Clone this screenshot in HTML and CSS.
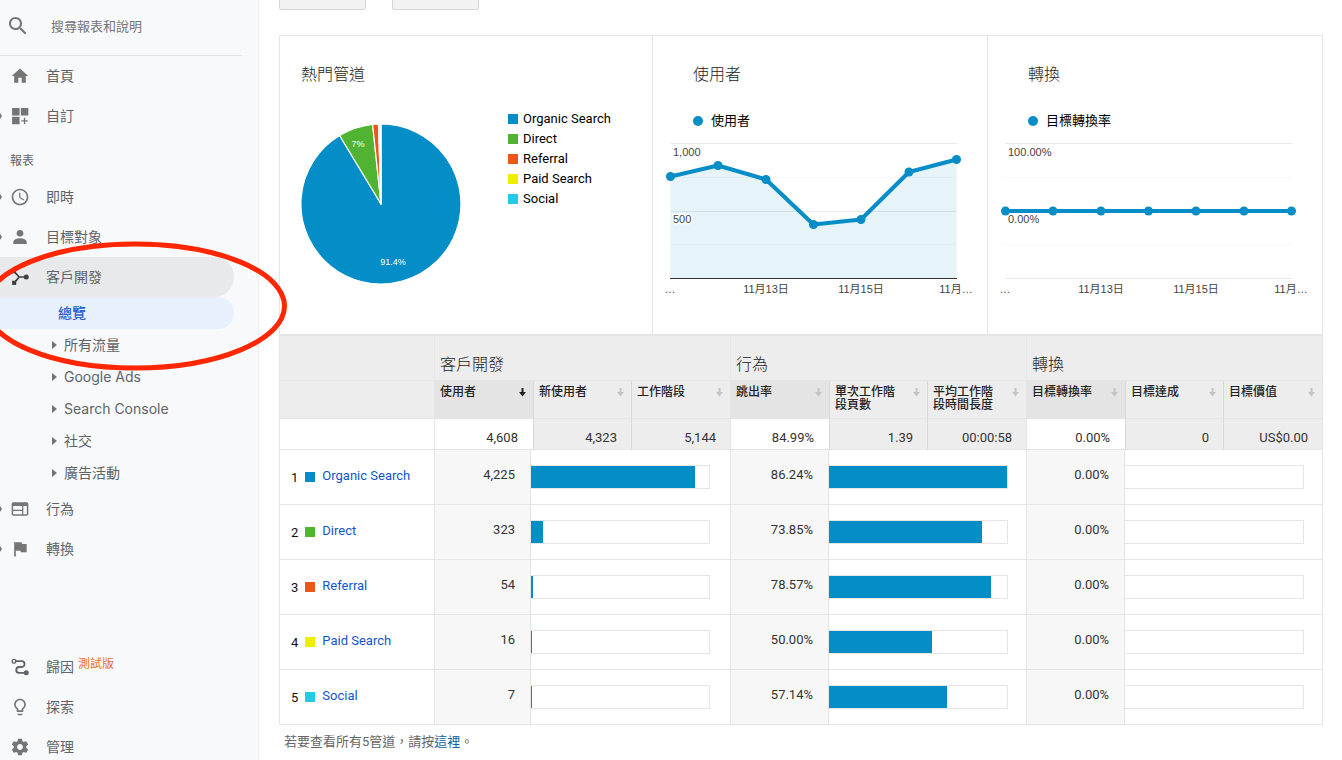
FILE: index.html
```html
<!DOCTYPE html>
<html lang="zh-Hant">
<head>
<meta charset="utf-8">
<title>客戶開發總覽</title>
<link rel="stylesheet" href="styles.css">
</head>
<body>
<aside class="sidebar">
  <label class="search">
    <svg class="search-icon" viewBox="0 0 24 24"><path d="M15.5 14h-.79l-.28-.27C15.41 12.59 16 11.11 16 9.5 16 5.91 13.09 3 9.5 3S3 5.91 3 9.5 5.91 16 9.5 16c1.61 0 3.09-.59 4.23-1.57l.27.28v.79l5 4.99L20.49 19l-4.99-5zm-6 0C7.01 14 5 11.99 5 9.5S7.01 5 9.5 5 14 7.01 14 9.5 11.99 14 9.5 14z"/></svg>
    <input class="search-input" type="text" placeholder="搜尋報表和說明" aria-label="搜尋報表和說明">
  </label>
  <nav class="menu">
    <a class="item" href="#"><span class="edge"></span><svg class="icon" viewBox="0 0 24 24"><path d="M10 20v-6h4v6h5v-8h3L12 3 2 12h3v8z"/></svg>首頁</a>
    <a class="item" href="#"><span class="edge"><svg class="edge-arrow" viewBox="0 0 2 6"><path d="M0 0l2 3-2 3z"/></svg></span><svg class="icon" viewBox="0 0 24 24"><path d="M2.500 2.500h9v9h-9zM13 2.500h9v9h-9zM2.500 13h9v9h-9zM16.700 14h1.600v3h3v1.600h-3v3h-1.600v-3h-3V17h3z"/></svg>自訂</a>
    <h2 class="section">報表</h2>
    <a class="item" href="#"><span class="edge"><svg class="edge-arrow" viewBox="0 0 2 6"><path d="M0 0l2 3-2 3z"/></svg></span><svg class="icon" viewBox="0 0 24 24"><path d="M11.990 2C6.470 2 2 6.480 2 12s4.470 10 9.990 10C17.520 22 22 17.520 22 12S17.520 2 11.990 2zM12 20c-4.420 0-8-3.580-8-8s3.580-8 8-8 8 3.580 8 8-3.580 8-8 8zm.5-13H11v6l5.250 3.150.75-1.230-4.500-2.670z"/></svg>即時</a>
    <a class="item" href="#"><span class="edge"><svg class="edge-arrow" viewBox="0 0 2 6"><path d="M0 0l2 3-2 3z"/></svg></span><svg class="icon" viewBox="0 0 24 24"><circle cx="12" cy="7.500" r="4"/><path d="M12 13.500c-3 0-8 1.300-8 4.500v2.500h16V18c0-3.200-5-4.500-8-4.500z"/></svg>目標對象</a>
    <a class="item open" href="#"><span class="edge"></span><svg class="icon" viewBox="0 0 24 24"><path d="M4.500 5L11 12L5 19M11 12h9" fill="none" stroke="currentColor" stroke-width="2"/><rect x="2" y="2.500" width="5" height="5"/><rect x="2.500" y="16.500" width="5" height="5"/><circle cx="19.500" cy="12" r="3"/></svg>客戶開發</a>
    <a class="sub current" href="#" aria-current="page">總覽</a>
    <a class="sub" href="#"><svg class="arrow" viewBox="0 0 5 8"><path d="M0 0l5 4-5 4z"/></svg>所有流量</a>
    <a class="sub" href="#"><svg class="arrow" viewBox="0 0 5 8"><path d="M0 0l5 4-5 4z"/></svg>Google Ads</a>
    <a class="sub" href="#"><svg class="arrow" viewBox="0 0 5 8"><path d="M0 0l5 4-5 4z"/></svg>Search Console</a>
    <a class="sub" href="#"><svg class="arrow" viewBox="0 0 5 8"><path d="M0 0l5 4-5 4z"/></svg>社交</a>
    <a class="sub" href="#"><svg class="arrow" viewBox="0 0 5 8"><path d="M0 0l5 4-5 4z"/></svg>廣告活動</a>
    <a class="item" href="#"><span class="edge"><svg class="edge-arrow" viewBox="0 0 2 6"><path d="M0 0l2 3-2 3z"/></svg></span><svg class="icon" viewBox="0 0 24 24"><path fill-rule="evenodd" d="M20 4H4c-1.100 0-2 .9-2 2v12c0 1.100.9 2 2 2h16c1.100 0 2-.9 2-2V6c0-1.100-.9-2-2-2zM14.500 18.300H3.800v-4h10.700zM14.500 12.800H3.800V8.500h10.700zM20.200 18.300h-4.200V8.500h4.200z"/></svg>行為</a>
    <a class="item" href="#"><span class="edge"><svg class="edge-arrow" viewBox="0 0 2 6"><path d="M0 0l2 3-2 3z"/></svg></span><svg class="icon" viewBox="0 0 24 24"><path d="M14.400 6L14 4H5v17h2v-7h5.600l.4 2h7V6z"/></svg>轉換</a>
  </nav>
  <nav class="menu tools">
    <a class="item" href="#"><span class="edge"></span><svg class="icon dark" viewBox="0 0 24 24"><path d="M6 5h8a3.200 3.200 0 0 1 0 7h-3a3.200 3.200 0 0 0 0 7h8" fill="none" stroke="currentColor" stroke-width="2.200"/><circle cx="4.800" cy="5" r="2.200" fill="#f8f9fb" stroke="currentColor" stroke-width="1.600"/><circle cx="19.500" cy="19" r="3"/></svg>歸因<sup class="beta">測試版</sup></a>
    <a class="item" href="#"><span class="edge"></span><svg class="icon" viewBox="0 0 24 24"><path d="M9 21c0 .55.45 1 1 1h4c.55 0 1-.45 1-1v-1H9v1zm3-19C8.140 2 5 5.140 5 9c0 2.380 1.190 4.470 3 5.740V17c0 .55.45 1 1 1h6c.55 0 1-.45 1-1v-2.260c1.810-1.270 3-3.360 3-5.740 0-3.860-3.140-7-7-7zm2.850 11.100l-.85.6V16h-4v-2.300l-.85-.6C7.800 12.160 7 10.630 7 9c0-2.760 2.240-5 5-5s5 2.240 5 5c0 1.630-.8 3.160-2.150 4.100z"/></svg>探索</a>
    <a class="item" href="#"><span class="edge"></span><svg class="icon" viewBox="0 0 24 24"><path d="M19.430 12.980c.04-.32.07-.64.07-.98s-.03-.66-.07-.98l2.110-1.650c.19-.15.24-.42.12-.64l-2-3.460c-.12-.22-.39-.3-.61-.22l-2.490 1c-.52-.4-1.080-.73-1.690-.98l-.38-2.650C14.460 2.180 14.250 2 14 2h-4c-.25 0-.46.18-.49.42l-.38 2.650c-.61.25-1.170.59-1.690.98l-2.490-1c-.23-.09-.49 0-.61.22l-2 3.460c-.13.22-.07.49.12.64l2.110 1.650c-.04.32-.07.65-.07.98s.03.66.07.98l-2.110 1.650c-.19.15-.24.42-.12.64l2 3.460c.12.22.39.3.61.22l2.490-1c.52.4 1.080.73 1.690.98l.38 2.650c.03.24.24.42.49.42h4c.25 0 .46-.18.49-.42l.38-2.650c.61-.25 1.170-.59 1.690-.98l2.490 1c.23.09.49 0 .61-.22l2-3.460c.12-.22.07-.49-.12-.64l-2.110-1.650zM12 15.500c-1.930 0-3.500-1.570-3.500-3.500s1.570-3.500 3.500-3.500 3.500 1.570 3.500 3.500-1.570 3.500-3.500 3.500z"/></svg>管理</a>
  </nav>
</aside>

<main class="main">
  <div class="toolbar">
    <button class="tool" type="button" aria-label="主要維度"></button>
    <button class="tool" type="button" aria-label="轉換"></button>
    <a class="tool-link" href="#">編輯管道分組</a>
  </div>

  <section class="charts">
    <article class="card card-pie">
      <h2 class="title">熱門管道</h2>
      <div class="pie-row">
        <svg class="pie" viewBox="0 0 160 160" role="img" aria-label="熱門管道">
          <g stroke="#fff" stroke-width="1.200" stroke-linejoin="round">
            <path fill="#058dc7" d="M80 80V0A80 80 0 1 1 38.600 11.500z"/>
            <path fill="#50b432" d="M80 80L38.600 11.500A80 80 0 0 1 71.600.4z"/>
            <path fill="#ed561b" d="M80 80L71.600.4A80 80 0 0 1 77.500 0z"/>
            <path fill="#edef00" d="M80 80L77.500 0H79.300z"/>
            <path d="M80 80V0M80 80L79.300 0"/>
          </g>
          <text class="pie-label" x="57" y="23">7%</text>
          <text class="pie-label" x="92" y="141">91.4%</text>
        </svg>
        <ul class="legend">
          <li class="key"><span class="swatch organic"></span>Organic Search</li>
          <li class="key"><span class="swatch direct"></span>Direct</li>
          <li class="key"><span class="swatch referral"></span>Referral</li>
          <li class="key"><span class="swatch paid"></span>Paid Search</li>
          <li class="key"><span class="swatch social"></span>Social</li>
        </ul>
      </div>
    </article>

    <article class="card">
      <h2 class="title">使用者</h2>
      <p class="series"><span class="dot"></span>使用者</p>
      <svg class="chart" viewBox="0 0 313 160" role="img" aria-label="使用者">
        <path class="minor" d="M6 37.500h287M6 104.500h287"/>
        <path class="major" d="M6 3.500h287M6 71.500h287"/>
        <path class="area" d="M6.500 36.500L54 25.500L102 39.500L149.500 84.500L197 79.500L245 32L292.500 19.500V138H6.500z"/>
        <path class="axis" d="M6 138.500h287"/>
        <path class="line" d="M6.500 36.500L54 25.500L102 39.500L149.500 84.500L197 79.500L245 32L292.500 19.500"/>
        <g class="points"><circle cx="6.500" cy="36.500" r="4.500"/><circle cx="54" cy="25.500" r="4.500"/><circle cx="102" cy="39.500" r="4.500"/><circle cx="149.500" cy="84.500" r="4.500"/><circle cx="197" cy="79.500" r="4.500"/><circle cx="245" cy="32" r="4.500"/><circle cx="292.500" cy="19.500" r="4.500"/></g>
        <text class="value" x="9" y="16">1,000</text>
        <text class="value" x="9" y="83">500</text>
        <text class="tick" x="6" y="153">…</text>
        <text class="tick" x="102" y="153">11月13日</text>
        <text class="tick" x="197" y="153">11月15日</text>
        <text class="tick" x="292" y="153">11月…</text>
      </svg>
    </article>

    <article class="card">
      <h2 class="title">轉換</h2>
      <p class="series"><span class="dot"></span>目標轉換率</p>
      <svg class="chart" viewBox="0 0 313 160" role="img" aria-label="目標轉換率">
        <path class="minor" d="M6 37.500h287M6 104.500h287"/>
        <path class="major" d="M6 3.500h287M6 138.500h287"/>
        <text class="value" x="9" y="16">100.00%</text>
        <text class="value" x="9" y="83">0.00%</text>
        <path class="line" d="M6.500 71h286"/>
        <g class="points"><circle cx="6.500" cy="71" r="4.500"/><circle cx="54" cy="71" r="4.500"/><circle cx="102" cy="71" r="4.500"/><circle cx="149.500" cy="71" r="4.500"/><circle cx="197" cy="71" r="4.500"/><circle cx="245" cy="71" r="4.500"/><circle cx="292.500" cy="71" r="4.500"/></g>
        <text class="tick" x="6" y="153">…</text>
        <text class="tick" x="102" y="153">11月13日</text>
        <text class="tick" x="197" y="153">11月15日</text>
        <text class="tick" x="292" y="153">11月…</text>
      </svg>
    </article>
  </section>

  <table class="report">
    <colgroup>
      <col class="w155"><col class="w96"><col class="w3"><col class="w98"><col class="w99">
      <col class="w98"><col class="w1"><col class="w98"><col class="w99">
      <col class="w98"><col class="w1"><col class="w98"><col class="w99">
    </colgroup>
    <thead>
      <tr class="groups">
        <td></td>
        <th colspan="4" scope="colgroup">客戶開發</th>
        <th colspan="4" scope="colgroup">行為</th>
        <th colspan="4" scope="colgroup">轉換</th>
      </tr>
      <tr class="metrics">
        <td></td>
        <th class="lead" colspan="2"><button class="sort active" type="button"><span>使用者</span><svg class="down" viewBox="0 0 7 9"><path d="M2.500 0h2v4H7L3.500 8.500 0 4h2.500z"/></svg></button></th>
        <th><button class="sort" type="button"><span>新使用者</span><svg class="down" viewBox="0 0 7 9"><path d="M2.500 0h2v4H7L3.500 8.500 0 4h2.500z"/></svg></button></th>
        <th><button class="sort" type="button"><span>工作階段</span><svg class="down" viewBox="0 0 7 9"><path d="M2.500 0h2v4H7L3.500 8.500 0 4h2.500z"/></svg></button></th>
        <th class="lead" colspan="2"><button class="sort" type="button"><span>跳出率</span><svg class="down" viewBox="0 0 7 9"><path d="M2.500 0h2v4H7L3.500 8.500 0 4h2.500z"/></svg></button></th>
        <th><button class="sort" type="button"><span>單次工作階<br>段頁數</span><svg class="down" viewBox="0 0 7 9"><path d="M2.500 0h2v4H7L3.500 8.500 0 4h2.500z"/></svg></button></th>
        <th><button class="sort" type="button"><span>平均工作階<br>段時間長度</span><svg class="down" viewBox="0 0 7 9"><path d="M2.500 0h2v4H7L3.500 8.500 0 4h2.500z"/></svg></button></th>
        <th class="lead" colspan="2"><button class="sort" type="button"><span>目標轉換率</span><svg class="down" viewBox="0 0 7 9"><path d="M2.500 0h2v4H7L3.500 8.500 0 4h2.500z"/></svg></button></th>
        <th><button class="sort" type="button"><span>目標達成</span><svg class="down" viewBox="0 0 7 9"><path d="M2.500 0h2v4H7L3.500 8.500 0 4h2.500z"/></svg></button></th>
        <th><button class="sort" type="button"><span>目標價值</span><svg class="down" viewBox="0 0 7 9"><path d="M2.500 0h2v4H7L3.500 8.500 0 4h2.500z"/></svg></button></th>
      </tr>
      <tr class="totals">
        <td></td>
        <td class="lead" colspan="2">4,608</td><td>4,323</td><td>5,144</td>
        <td class="lead" colspan="2">84.99%</td><td>1.39</td><td>00:00:58</td>
        <td class="lead" colspan="2">0.00%</td><td>0</td><td>US$0.00</td>
      </tr>
    </thead>
    <tbody>
      <tr>
        <th scope="row"><div class="channel">1<span class="swatch organic"></span><a href="#">Organic Search</a></div></th>
        <td class="num">4,225</td><td class="bar-cell wide" colspan="3"><div class="bar"><div class="fill" style="width:92%"></div></div></td>
        <td class="num">86.24%</td><td class="bar-cell" colspan="3"><div class="bar"><div class="fill" style="width:100%"></div></div></td>
        <td class="num">0.00%</td><td class="bar-cell" colspan="3"><div class="bar"></div></td>
      </tr>
      <tr>
        <th scope="row"><div class="channel">2<span class="swatch direct"></span><a href="#">Direct</a></div></th>
        <td class="num">323</td><td class="bar-cell wide" colspan="3"><div class="bar"><div class="fill" style="width:7%"></div></div></td>
        <td class="num">73.85%</td><td class="bar-cell" colspan="3"><div class="bar"><div class="fill" style="width:86%"></div></div></td>
        <td class="num">0.00%</td><td class="bar-cell" colspan="3"><div class="bar"></div></td>
      </tr>
      <tr>
        <th scope="row"><div class="channel">3<span class="swatch referral"></span><a href="#">Referral</a></div></th>
        <td class="num">54</td><td class="bar-cell wide" colspan="3"><div class="bar"><div class="fill" style="width:1%"></div></div></td>
        <td class="num">78.57%</td><td class="bar-cell" colspan="3"><div class="bar"><div class="fill" style="width:91%"></div></div></td>
        <td class="num">0.00%</td><td class="bar-cell" colspan="3"><div class="bar"></div></td>
      </tr>
      <tr>
        <th scope="row"><div class="channel">4<span class="swatch paid"></span><a href="#">Paid Search</a></div></th>
        <td class="num">16</td><td class="bar-cell wide" colspan="3"><div class="bar"><div class="fill" style="width:0.3%"></div></div></td>
        <td class="num">50.00%</td><td class="bar-cell" colspan="3"><div class="bar"><div class="fill" style="width:58%"></div></div></td>
        <td class="num">0.00%</td><td class="bar-cell" colspan="3"><div class="bar"></div></td>
      </tr>
      <tr>
        <th scope="row"><div class="channel">5<span class="swatch social"></span><a href="#">Social</a></div></th>
        <td class="num">7</td><td class="bar-cell wide" colspan="3"><div class="bar"><div class="fill" style="width:0.2%"></div></div></td>
        <td class="num">57.14%</td><td class="bar-cell" colspan="3"><div class="bar"><div class="fill" style="width:66%"></div></div></td>
        <td class="num">0.00%</td><td class="bar-cell" colspan="3"><div class="bar"></div></td>
      </tr>
    </tbody>
  </table>
  <p class="note">若要查看所有5管道，請按<a href="#">這裡</a>。</p>
</main>

<svg class="highlight" viewBox="0 0 290 136" aria-hidden="true"><ellipse cx="135" cy="68" rx="149.500" ry="62"/></svg>
</body>
</html>
```

FILE: styles.css
```css
* { box-sizing: border-box; }

body {
  position: relative;
  display: flex;
  height: 100vh;
  margin: 0;
  overflow: hidden;
  background: #fff;
  color: #333;
  font-family: Roboto, "Noto Sans CJK TC", sans-serif;
  font-size: 13px;
}

a { text-decoration: none; }
h2, p, ul { margin: 0; padding: 0; font-weight: 400; }
svg { display: block; flex: none; fill: currentColor; }

/* Sidebar */
.sidebar {
  flex: none;
  width: 259px;
  overflow: hidden;
  background: #f8f9fb;
  border-right: 1px solid #f0f0f2;
}

.search {
  display: flex;
  align-items: center;
  gap: 21px;
  height: 56px;
  margin-right: 16px;
  padding: 0 0 3px 6px;
  border-bottom: 1px solid #e2e3e5;
}
.search-icon { width: 24px; height: 24px; color: #757575; }
.search-input {
  flex: 1;
  min-width: 0;
  padding: 0;
  border: 0;
  outline: 0;
  background: none;
  color: #757575;
  font: inherit;
}
.search-input::placeholder { color: #757575; opacity: 1; }

.item, .sub {
  display: flex;
  align-items: center;
  margin-right: 24px;
  padding-bottom: 2px;
  color: #5f6368;
  font-family: Inter, "Noto Sans CJK TC", sans-serif;
  font-size: 14px;
}
.item { height: 40px; }
.edge { width: 10px; margin-top: 2px; color: #757575; }
.edge-arrow { width: 2px; height: 6px; }
.icon { width: 20px; height: 20px; margin: 2px 16px 0 0; color: #757575; }
.icon.dark { color: #5f6368; }
.item.open { background: #e8e9eb; border-radius: 0 20px 20px 0; }
.item.open .icon { color: #3c4043; }
.section {
  height: 41px;
  padding: 9px 0 0 10px;
  color: #5f6368;
  font-size: 12px;
  line-height: 33px;
}
.sub { height: 32px; padding-left: 52px; }
.sub.current {
  padding-left: 58px;
  background: #e8f0fe;
  border-radius: 0 16px 16px 0;
  color: #2a62d0;
  font-weight: 500;
}
.arrow { width: 5px; height: 8px; margin: 2px 7px 0 0; color: #757575; }
.tools { margin-top: 78px; }
.beta {
  margin: 0 0 8px 4px;
  color: #e8711c;
  font-size: 12px;
}

/* Main column */
.main { flex: 1; min-width: 0; padding: 0 19px 0 20px; }
.toolbar {
  display: flex;
  align-items: flex-end;
  gap: 26px;
  height: 10px;
  margin-bottom: 25px;
  overflow: hidden;
}
.tool {
  flex: none;
  width: 87px;
  height: 28px;
  border: 1px solid #d6d6d6;
  border-radius: 2px;
  background: #f2f2f2;
}
.tool-link {
  margin-bottom: 6px;
  padding-left: 2px;
  color: #a9c8ea;
  line-height: 20px;
}

.charts {
  display: grid;
  grid-template-columns: 372fr 335fr 335fr;
  border: 1px solid #e5e5e5;
  border-bottom-width: 2px;
}
.card { min-width: 0; padding: 27px 0 34px 11px; }
.card + .card { border-left: 1px solid #e5e5e5; }
.card-pie { padding-left: 21px; }
.title { color: #222; font-size: 16px; font-weight: 300; line-height: 24px; }
.card .title, .series { margin-left: 29px; }
.card-pie .title { margin-left: 0; }
.pie-row { display: flex; gap: 47px; margin-top: 22px; }
.pie { width: 160px; height: 160px; margin-top: 15px; }
.pie-label {
  fill: #fff;
  font-family: "Liberation Sans", sans-serif;
  font-size: 9px;
  text-anchor: middle;
}
.legend { list-style: none; color: #000; line-height: 20px; }
.key { display: flex; align-items: center; gap: 5px; }
.swatch { flex: none; width: 10px; height: 10px; }
.organic { background: #058dc7; }
.direct { background: #50b432; }
.referral { background: #ed561b; }
.paid { background: #edef00; }
.social { background: #24cbe5; }
.series {
  display: flex;
  align-items: center;
  gap: 8px;
  margin-top: 24px;
  color: #000;
  line-height: 20px;
}
.dot { width: 10px; height: 10px; border-radius: 50%; background: #058dc7; }

.chart { width: 313px; height: 160px; margin-top: 9px; }
.minor { stroke: #f7f7f7; }
.major { stroke: #e9e9e9; }
.axis { stroke: #333; }
.area { fill: #058dc7; fill-opacity: .1; }
.line { fill: none; stroke: #058dc7; stroke-width: 4; stroke-linejoin: round; }
.points { fill: #058dc7; }
.value, .tick {
  fill: #444;
  font-family: "Liberation Sans", "Noto Sans CJK TC", sans-serif;
  font-size: 11px;
}
.value { stroke: #fff; stroke-width: 3; paint-order: stroke; }
.tick { text-anchor: middle; }

/* Report table */
.report {
  width: 100%;
  border-right: 1px solid #e5e5e5;
  border-spacing: 0;
  table-layout: fixed;
}
.w155 { width: 155px; }
.w96 { width: 96px; }
.w98 { width: 98px; }
.w99 { width: 99px; }
.w3 { width: 3px; }
.w1 { width: 1px; }
.report th, .report td {
  padding: 0;
  border-left: 1px solid #e5e5e5;
  border-bottom: 1px solid #e5e5e5;
  font-weight: 400;
  text-align: left;
}
.groups { height: 45px; background: #ededed; }
.report .groups th {
  padding: 14px 5px 0;
  color: #222;
  font-size: 16px;
  font-weight: 300;
  line-height: 24px;
}
.metrics { height: 38px; background: #ededed; }
.metrics th { vertical-align: top; }
.report .metrics .lead { background: #e4e4e4; }
.report .metrics th:not(.lead), .report .totals td:not(.lead):not(:first-child) { border-left-color: #d8d8d8; }
.sort {
  display: flex;
  justify-content: space-between;
  width: 100%;
  padding: 5px 7px 0 5px;
  border: 0;
  background: none;
  color: #222;
  font: 500 12px/13px Roboto, "Noto Sans CJK TC", sans-serif;
  text-align: left;
  white-space: nowrap;
}
.down { width: 7px; height: 9px; margin-top: 2px; color: #c4c4c4; }
.active .down { color: #222; }
.totals { height: 31px; background: #ededed; }
.report .totals td { padding: 6px 14px 0 0; text-align: right; }
.report .totals .lead { padding-right: 15px; }
.totals .lead, .totals td:first-child { background: #fff; }

tbody tr { height: 55px; }
.channel {
  display: flex;
  align-items: center;
  gap: 7px;
  padding-left: 11px;
  color: #111;
}
.channel a { padding-bottom: 4px; color: #1155cc; }
.report .num {
  padding: 0 15px 6px 0;
  background: #f7f7f7;
  text-align: right;
}
.report .bar-cell { padding-right: 18px; }
.report .wide { padding-right: 20px; }
.bar {
  height: 24px;
  border: 1px solid #e5e5e5;
  border-left: 0;
}
.fill { min-width: 1px; height: 22px; background: #058dc7; }

.note { padding: 7px 0 0 5px; color: #666; line-height: 20px; }
.note a { color: #15639d; }

/* Hand-drawn ring over the open menu group */
.highlight {
  position: absolute;
  top: 238px;
  left: 0;
  width: 290px;
  height: 136px;
  fill: none;
  stroke: #ff2600;
  stroke-width: 5;
  pointer-events: none;
}
```
